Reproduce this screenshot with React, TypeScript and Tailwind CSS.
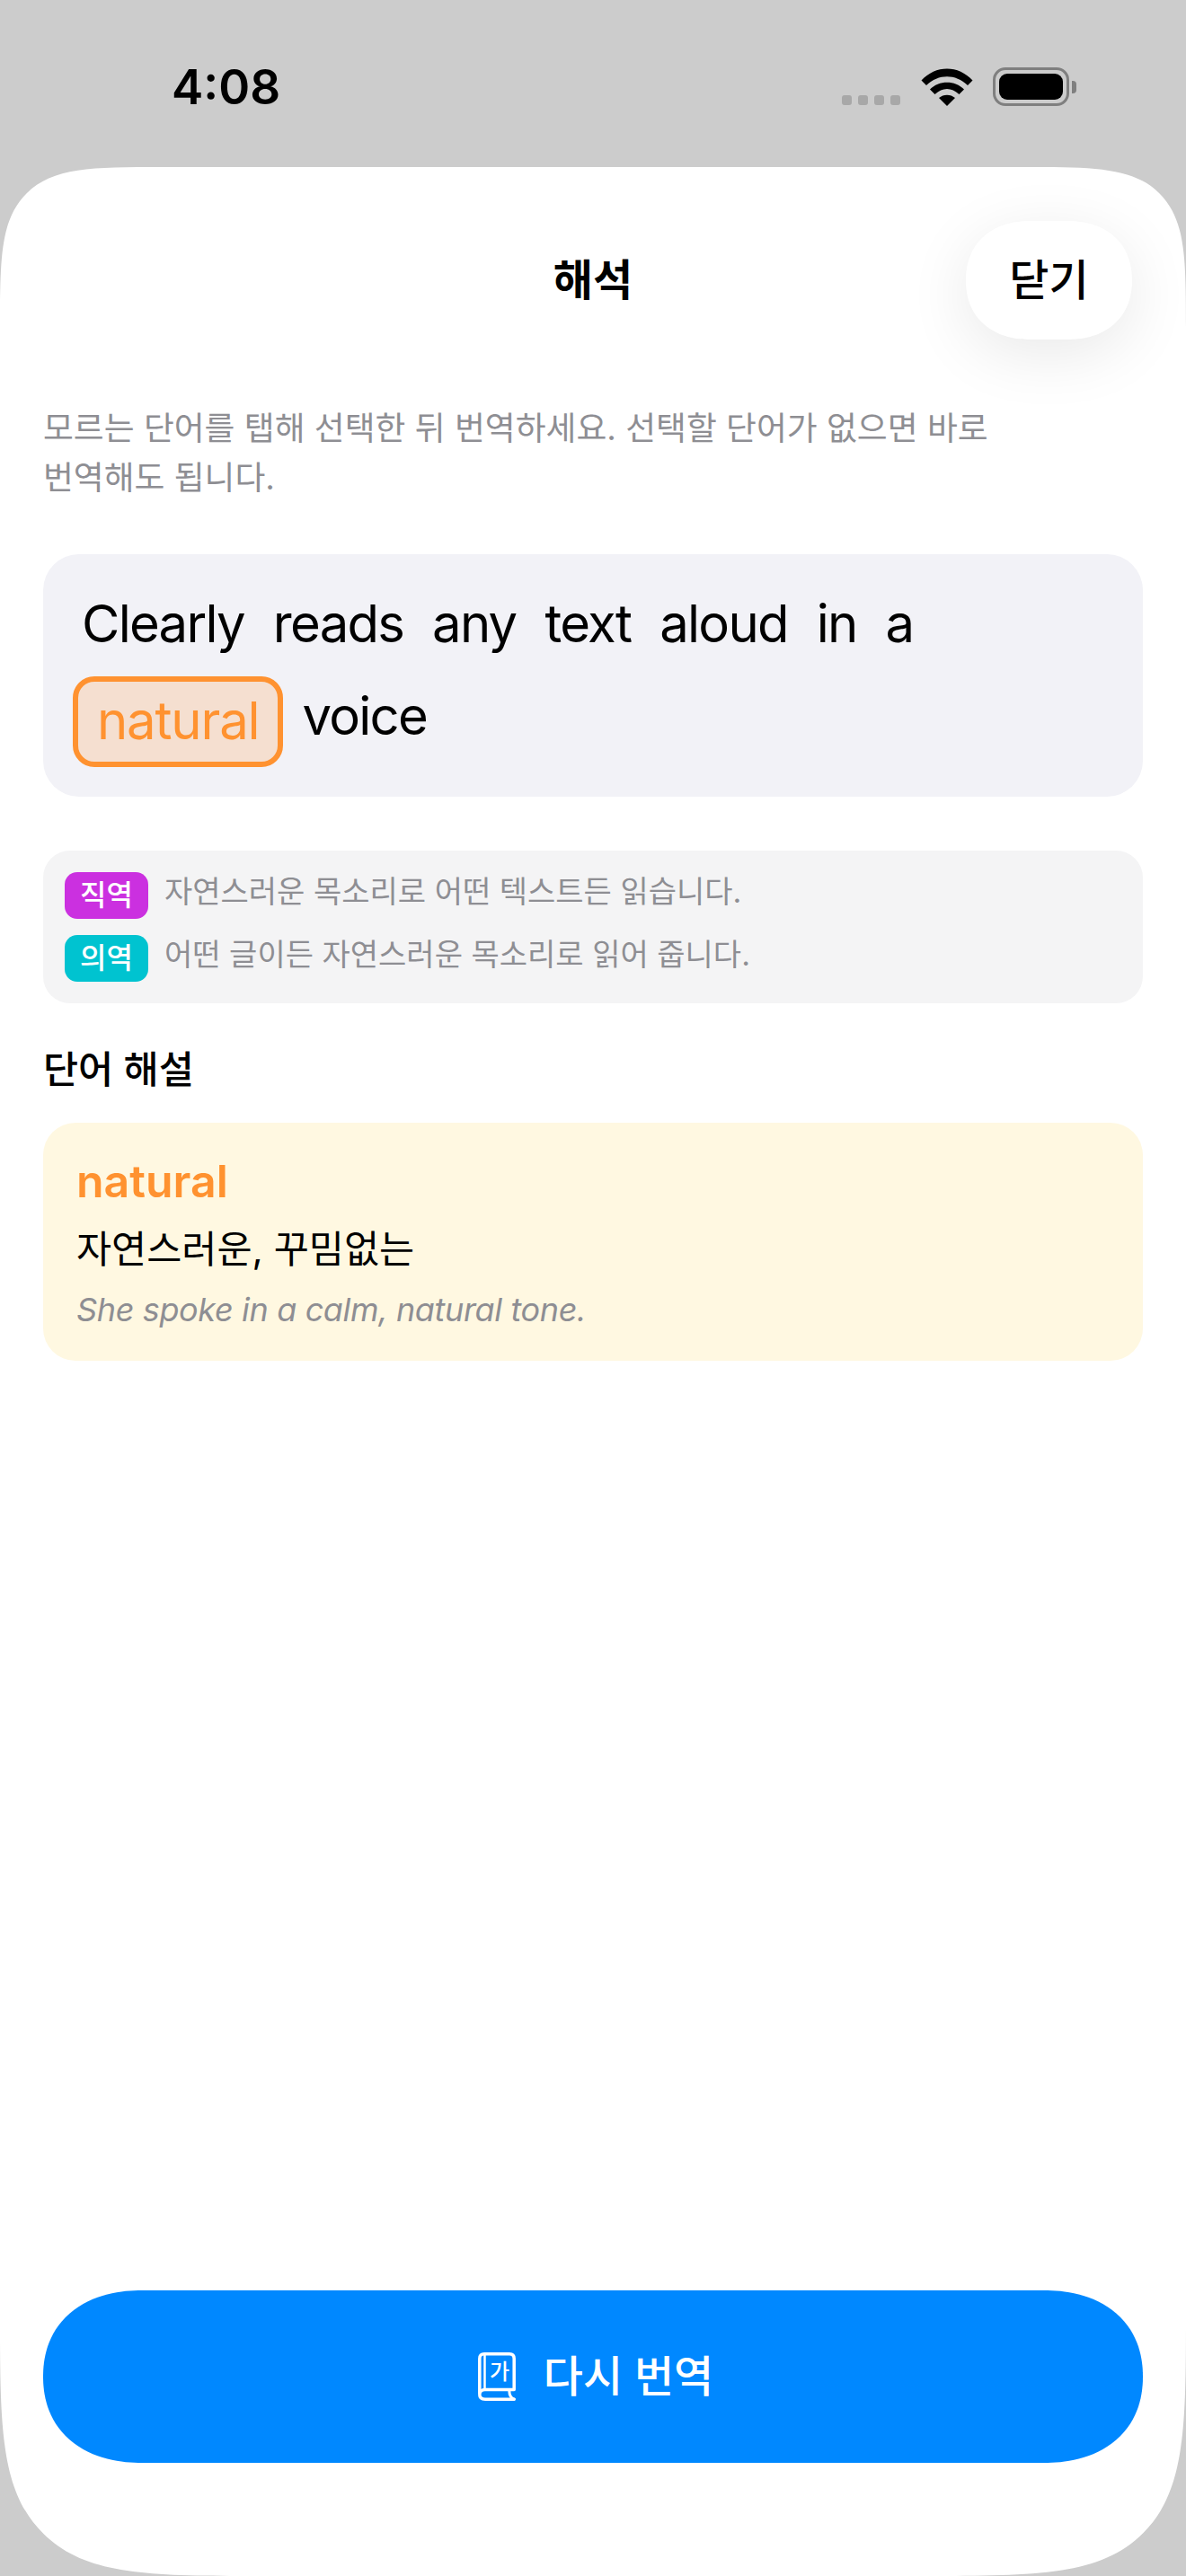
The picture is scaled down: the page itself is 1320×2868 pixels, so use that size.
import React from "react";

const sourceWords = ["Clearly", "reads", "any", "text", "aloud", "in", "a"];

function StatusBar() {
    return (
        <div className="h-[186px] flex items-start justify-between pl-[191px] pr-[122px] shrink-0">
            <span className="mt-[64px] text-[53px] leading-[66px] font-semibold text-black">4:08</span>
            <div className="flex items-end mt-[75px]">
                <div className="flex gap-[7px] mb-[1px] mr-[23px]">
                    <div className="w-[11px] h-[11px] rounded-[3px] bg-[#a8a8a8]" />
                    <div className="w-[11px] h-[11px] rounded-[3px] bg-[#a8a8a8]" />
                    <div className="w-[11px] h-[11px] rounded-[3px] bg-[#a8a8a8]" />
                    <div className="w-[11px] h-[11px] rounded-[3px] bg-[#a8a8a8]" />
                </div>
                <svg width="58" height="42" viewBox="0 0 58 42" className="mr-[22px]">
                    <path d="M0.5 13.5 C16 -4 42 -4 57.5 13.5 L52 19 C38.500 6 19.500 6 6 19 Z" fill="#000" />
                    <path d="M10 23.500 C20 13 38 13 48 23.500 L42.500 29 C34 21 24 21 15.500 29 Z" fill="#000" />
                    <path d="M20 33 C25 28.500 33 28.500 38 33 L29 42 Z" fill="#000" />
                </svg>
                <div className="flex items-center">
                    <div className="w-[85px] h-[43px] rounded-[14px] border-[3px] border-[#7f7f7f] p-[4px]">
                        <div className="w-full h-full rounded-[9px] bg-black" />
                    </div>
                    <div className="w-[5px] h-[14px] ml-[3px] rounded-r-[4px] bg-[#7f7f7f]" />
                </div>
            </div>
        </div>
    );
}

function BookIcon() {
    return (
        <svg width="42" height="54" viewBox="0 0 42 54" fill="none" stroke="#fff" strokeWidth="3.500" strokeLinecap="round" strokeLinejoin="round">
            <path d="M1.800 46 V7 C1.800 3.500 3.500 1.800 7 1.800 H35 C38.500 1.800 40.200 3.500 40.200 7 V41.500 H8 C4 41.500 1.800 43.500 1.800 47 C1.800 50.500 4 52.200 8 52.200 H40.200" />
            <path d="M7.500 2 V41" strokeWidth="2.500" />
            <path d="M35 42 C34.500 46.500 36.500 50.500 40.200 52.200" strokeWidth="3" />
            <text x="24" y="30" textAnchor="middle" fontSize="24" fill="#fff" stroke="none">가</text>
        </svg>
    );
}

export default function App() {
    return (
        <div className="w-[1320px] h-[2868px] flex flex-col bg-[#cccccc] font-['Inter','Noto_Sans_CJK_KR',sans-serif] overflow-hidden">
            <StatusBar />
            <div className="flex-1 flex flex-col bg-white px-[48px] pb-[126px] rounded-t-[185px] rounded-b-[300px] [corner-shape:squircle]">
                <div className="grid grid-cols-[1fr_auto_1fr] items-center pt-[60px] mx-[12px]">
                    <div />
                    <h1 className="text-[48px] font-semibold text-black">해석</h1>
                    <div className="flex justify-end">
                        <button className="w-[185px] h-[132px] rounded-[72px/66px] [corner-shape:superellipse(1.15)] bg-white text-[48px] font-medium text-black shadow-[0_16px_70px_rgba(0,0,0,0.09)]">
                            닫기
                        </button>
                    </div>
                </div>

                <p className="mt-[71px] w-[1080px] text-[36.800px] leading-[55px] text-[#8e8e93] break-keep">
                    모르는 단어를 탭해 선택한 뒤 번역하세요. 선택할 단어가 없으면 바로 번역해도 됩니다.
                </p>

                <div className="mt-[58px] h-[270px] rounded-[40px] bg-[#f2f2f7] pl-[33px] pr-[40px] pt-[34px]">
                    <div className="flex flex-wrap items-center gap-x-[12px] gap-y-[16px] text-[58px] leading-[72px] tracking-[-0.03em]">
                        {sourceWords.map((word) => (
                            <span key={word} className="px-[10px] h-[86px] flex items-center text-black">
                                {word}
                            </span>
                        ))}
                        <span className="h-[101px] px-[21px] pb-[4px] flex items-center rounded-[24px] border-[6px] border-[#ff9230] bg-[#f5dfd0] tracking-[-0.02em] text-[#ff9230]">
                            natural
                        </span>
                        <span className="h-[101px] pb-[14px] ml-[9px] flex items-center text-black">voice</span>
                    </div>
                </div>

                <div className="mt-[60px] h-[170px] rounded-[30px] bg-[#f4f4f5] pl-[24px] pt-[24px] flex flex-col gap-[18px]">
                    <div className="flex items-start gap-[18px]">
                        <span className="w-[93px] h-[52px] rounded-[14px] bg-[#cb30e0] flex items-center justify-center text-[32px] font-medium text-white">직역</span>
                        <span className="-mt-[4px] text-[34px] leading-[52px] text-[#8e8e93]">자연스러운 목소리로 어떤 텍스트든 읽습니다.</span>
                    </div>
                    <div className="flex items-start gap-[18px]">
                        <span className="w-[93px] h-[52px] rounded-[14px] bg-[#00c3d0] flex items-center justify-center text-[32px] font-medium text-white">의역</span>
                        <span className="-mt-[4px] text-[34px] leading-[52px] text-[#8e8e93]">어떤 글이든 자연스러운 목소리로 읽어 줍니다.</span>
                    </div>
                </div>

                <h2 className="mt-[46px] text-[42.500px] leading-[56px] font-medium text-black">단어 해설</h2>

                <div className="mt-[31px] h-[265px] rounded-[36px] bg-[#fff8e1] pl-[37px] pt-[32px] flex flex-col">
                    <span className="text-[50px] leading-[66px] font-semibold text-[#ff9230]">natural</span>
                    <span className="mt-[10px] text-[42.500px] leading-[66px] text-black">자연스러운, 꾸밈없는</span>
                    <span className="mt-[4px] text-[36px] leading-[60px] italic tracking-[-0.01em] text-[#8e8e93]">She spoke in a calm, natural tone.</span>
                </div>

                <button className="mt-auto h-[192px] pl-[6px] rounded-[110px/96px] [corner-shape:superellipse(1.15)] bg-[#0088ff] flex items-center justify-center gap-[31px] text-[48px] font-medium text-white">
                    <BookIcon />
                    다시 번역
                </button>
            </div>
        </div>
    );
}
